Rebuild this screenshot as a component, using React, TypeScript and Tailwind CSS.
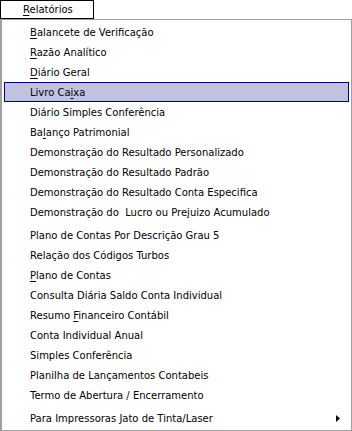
import React from "react";

type Item = { label: string; key?: number; submenu?: boolean; active?: boolean };

const GROUPS: Item[][] = [
  [
    { label: "Balancete de Verificação", key: 0 },
    { label: "Razão Analítico", key: 0 },
    { label: "Diário Geral", key: 0 },
    { label: "Livro Caixa", key: 8, active: true },
    { label: "Diário Simples Conferência" },
    { label: "Balanço Patrimonial", key: 2 },
    { label: "Demonstração do Resultado Personalizado" },
    { label: "Demonstração do Resultado Padrão" },
    { label: "Demonstração do Resultado Conta Especifica" },
    { label: "Demonstração do  Lucro ou Prejuizo Acumulado" },
  ],
  [
    { label: "Plano de Contas Por Descrição Grau 5" },
    { label: "Relação dos Códigos Turbos" },
    { label: "Plano de Contas", key: 0 },
    { label: "Consulta Diária Saldo Conta Individual" },
    { label: "Resumo Financeiro Contábil", key: 7 },
    { label: "Conta Individual Anual" },
    { label: "Simples Conferência" },
    { label: "Planilha de Lançamentos Contabeis" },
    { label: "Termo de Abertura / Encerramento" },
  ],
  [{ label: "Para Impressoras Jato de Tinta/Laser", submenu: true }],
];

function Label({ text, k }: { text: string; k?: number }) {
  if (k === undefined) return <span className="whitespace-pre">{text}</span>;
  return (
    <span className="whitespace-pre">
      {text.slice(0, k)}
      <span className="underline underline-offset-2">{text[k]}</span>
      {text.slice(k + 1)}
    </span>
  );
}

function Row({ item }: { item: Item }) {
  return (
    <div
      className={`h-[20px] flex items-center justify-between pl-[25px] pr-[8px] pt-px border ${
        item.active ? "bg-[#c1c2e0] border-[#000080]" : "border-transparent"
      }`}
    >
      <Label text={item.label} k={item.key} />
      {item.submenu && (
        <svg width="4" height="7" viewBox="0 0 4 7">
          <path d="M0 0 L4 3.5 L0 7 Z" fill="#000" />
        </svg>
      )}
    </div>
  );
}

export default function App() {
  return (
    <div
      className="w-[352px] h-[431px] bg-white text-black text-[10px] leading-none flex flex-col overflow-hidden"
      style={{ fontFamily: "Tahoma, 'DejaVu Sans', sans-serif" }}
    >
      <div className="h-[19px] flex">
        <div className="w-[94px] h-[19px] border border-black flex items-center pl-[22px] pt-px">
          <Label text="Relatórios" k={0} />
        </div>
      </div>
      <div className="flex-1 border border-[#a0a0a0] border-l-2 pt-[2px] px-[2px] flex flex-col">
        {GROUPS.map((g, gi) => (
          <div key={gi} className={gi > 0 ? "mt-[3px]" : ""}>
            {g.map((it) => (
              <Row key={it.label} item={it} />
            ))}
          </div>
        ))}
      </div>
    </div>
  );
}
